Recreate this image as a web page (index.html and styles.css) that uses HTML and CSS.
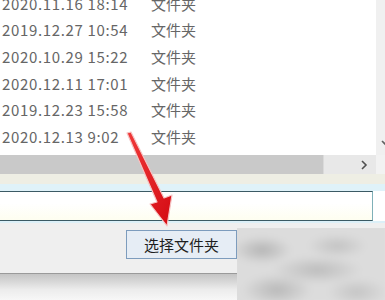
FILE: index.html
```html
<!DOCTYPE html>
<html>
<head>
  <title>选择文件夹</title>
  <link rel="stylesheet" href="styles.css">
</head>
<body>
  <div class="pane">
    <div class="list">
      <div class="rows">
        <div class="row"><span class="date">2020.11.16 18:14</span><span class="type">文件夹</span></div>
        <div class="row"><span class="date">2019.12.27 10:54</span><span class="type">文件夹</span></div>
        <div class="row"><span class="date">2020.10.29 15:22</span><span class="type">文件夹</span></div>
        <div class="row"><span class="date">2020.12.11 17:01</span><span class="type">文件夹</span></div>
        <div class="row"><span class="date">2019.12.23 15:58</span><span class="type">文件夹</span></div>
        <div class="row"><span class="date">2020.12.13 9:02</span><span class="type">文件夹</span></div>
      </div>
    </div>
    <div class="vbar">
      <svg class="down" width="9" height="8" viewBox="0 0 9 8"><path d="M2 2 L6 6 L10 2" fill="none" stroke="#606060" stroke-width="1.6"/></svg>
    </div>
  </div>

  <div class="hbar">
    <div class="track">
      <div class="thumb"></div>
      <svg class="right" width="8" height="10" viewBox="0 0 8 10"><path d="M2 1 L6 5 L2 9" fill="none" stroke="#505050" stroke-width="1.6"/></svg>
    </div>
    <div class="corner"></div>
  </div>

  <div class="tint"></div>
  <div class="glow"></div>

  <div class="field">
    <input class="path" type="text" value="">
  </div>

  <div class="footer">
    <button class="pick">选择文件夹</button>
  </div>
  <div class="edge"></div>
  <div class="shadow"></div>

  <!-- blurred watermark over the corner -->
  <div class="mark"><div class="smudge"></div></div>

  <svg class="arrow" width="385" height="300" viewBox="0 0 385 300">
    <defs>
      <linearGradient id="red" x1="0" y1="0" x2="1" y2="1">
        <stop offset="0" stop-color="#f03a3a"/>
        <stop offset="1" stop-color="#d40a12"/>
      </linearGradient>
    </defs>
    <polygon points="127,133 131,132 164,198 172,195 167,226 150,204 157,202" fill="url(#red)" stroke="#f6c4c4" stroke-width="1.2" stroke-linejoin="round"/>
  </svg>
</body>
</html>
```

FILE: styles.css
```css
body {
  margin: 0;
  width: 385px;
  height: 300px;
  overflow: hidden;
  position: relative;
  background: #fff;
  font-family: "Noto Sans CJK SC", "Noto Sans", sans-serif;
}

.pane {
  display: grid;
  grid-template-columns: 1fr 9px;
  height: 155px;
}

.list {
  background: #fff;
  overflow: hidden;
}

.rows {
  margin-top: -10px;
}

.row {
  display: flex;
  align-items: center;
  height: 26.6px;
  font-size: 15px;
  color: #666;
}

.date {
  width: 149px;
  padding-left: 2px;
  letter-spacing: 0.65px;
}

.vbar {
  background: #f0f0f0;
  position: relative;
}

.down {
  position: absolute;
  left: 4px;
  top: 139px;
}

.hbar {
  display: grid;
  grid-template-columns: 1fr 9px;
  height: 19px;
}

.track {
  background: #e8e8e8;
  display: flex;
  align-items: center;
}

.thumb {
  width: 323px;
  height: 100%;
  background: #c9c9c9;
  border-right: 1px solid #dadada;
}

.right {
  margin-left: 36px;
}

.corner {
  background: #f2f2f2;
}

.tint {
  height: 10px;
  background: #eeeee4;
}

.glow {
  height: 7px;
  background: #dff2f9;
}

.field {
  width: 373px;
}

.path {
  display: block;
  box-sizing: border-box;
  width: 100%;
  height: 30px;
  margin: 0;
  border: none;
  border-top: 1px solid #3b5a64;
  border-bottom: 1px solid #3b5a64;
  border-right: 1px solid #7fb0b8;
  background: linear-gradient(#ffffff 40%, #fefef0);
  outline: none;
}

.footer {
  height: 52px;
  box-sizing: border-box;
  padding: 7px 0 0 126px;
  background: #efefef;
  border-top: 2px solid #dcf0f8;
}

.pick {
  width: 111px;
  height: 29px;
  padding: 0;
  font-family: "Noto Sans CJK SC", sans-serif;
  font-size: 15px;
  color: #1e1e1e;
  background: #e6edf5;
  border: 1px solid #7d9cbd;
  border-radius: 0;
}

.edge {
  height: 1px;
  background: #9a9a9a;
}

.shadow {
  height: 26px;
  background: linear-gradient(#c4c4c4, #ececec 60%, #f7f7f7);
}

.mark {
  position: absolute;
  left: 237px;
  top: 228px;
  width: 148px;
  height: 72px;
  overflow: hidden;
  background: #dcdcdc;
}

.smudge {
  margin: -6px;
  height: 84px;
  background:
    radial-gradient(ellipse 30px 14px at 31px 28px, #b4b4b4, transparent),
    radial-gradient(ellipse 30px 12px at 106px 24px, #c2c2c2, transparent),
    radial-gradient(ellipse 45px 14px at 86px 48px, #bcbcbc, transparent),
    radial-gradient(ellipse 35px 16px at 46px 68px, #b8b8b8, transparent),
    radial-gradient(ellipse 30px 14px at 126px 70px, #c4c4c4, transparent),
    #dcdcdc;
  filter: blur(3px);
}

.arrow {
  position: absolute;
  left: 0;
  top: 0;
}
```
